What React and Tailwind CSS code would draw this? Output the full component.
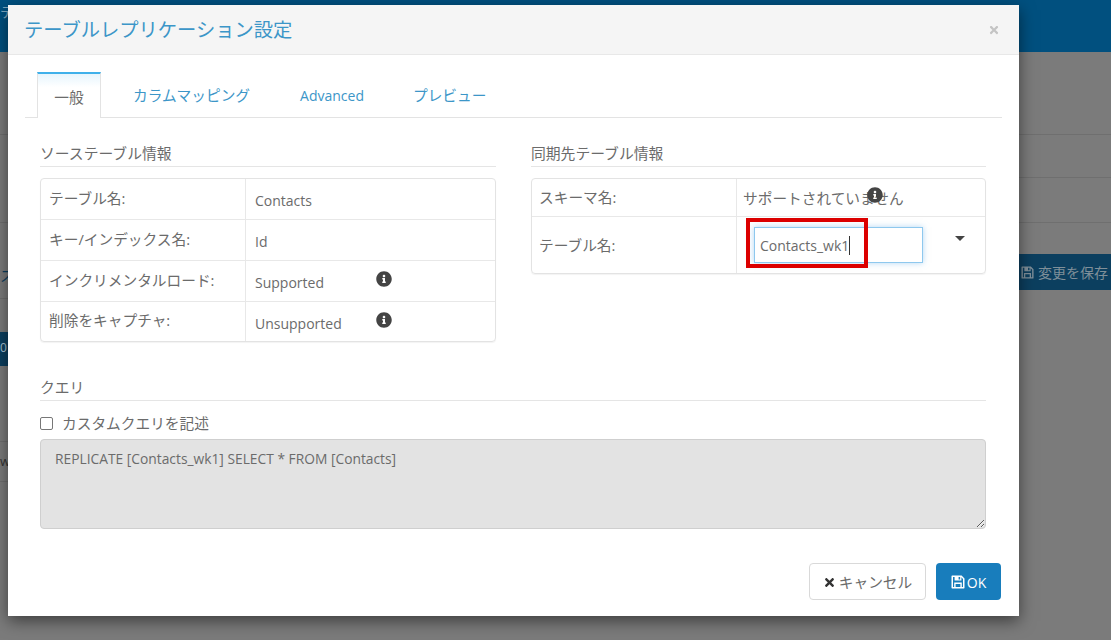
import { FaInfoCircle, FaTimes } from 'react-icons/fa'

const FONT = "font-['Open_Sans','Noto_Sans_CJK_JP',sans-serif]"

const SOURCE_ROWS = [
  { label: 'テーブル名:', value: 'Contacts', height: 'h-[40px]' },
  { label: 'キー/インデックス名:', value: 'Id', height: 'h-[41px]' },
  { label: 'インクリメンタルロード:', value: 'Supported', info: true, height: 'h-[41px]' },
  { label: '削除をキャプチャ:', value: 'Unsupported', info: true, height: 'h-[40px]' },
]

// floppy-o, the fa package only has a thinner one
function SaveIcon({ className }) {
  return (
    <svg viewBox="0 0 14 14" className={className} fill="currentColor">
      <path
        fillRule="evenodd"
        d="M1.2 0.5H10.6L13.5 3.4V12.8Q13.5 13.5 12.8 13.5H1.2Q0.5 13.5 0.5 12.8V1.2Q0.5 0.5 1.2 0.5ZM2 2V12H3.2V7.6H10.8V12H12V4L10.4 2.3V5.6H3.6V2ZM4.6 9V12H9.4V9ZM7.6 2V4.6H9.2V2Z"
      />
    </svg>
  )
}

function SectionTitle({ children }) {
  return (
    <div className="h-[27px] border-b border-[#e5e5e5] text-[14.8px] leading-[26px] text-[#6b6b6b]">{children}</div>
  )
}

// modal behind page, only slivers show on both sides
function BackgroundPage() {
  return (
    <div className="h-[640px] overflow-hidden bg-[#7b7b7b]">
      <div className="h-[52px] bg-[#01507f] pt-[2px] text-[14px] leading-[20px] text-[#7fa8bf]">テ</div>
      <div className="h-[83px] border-b border-[#6f6f6f]" />
      <div className="ml-[1000px] h-[43px] border-b border-[#6f6f6f]" />
      <div className="h-[45px] border-b border-[#6f6f6f]" />
      <div className="flex justify-end pt-[31px]">
        <div className="flex h-[36px] w-[92px] items-center gap-[4px] bg-[#0c3f5f] pl-[2px] text-[14px] whitespace-nowrap text-[#7f8f99]">
          <SaveIcon className="h-[13px] w-[13px] shrink-0" />
          変更を保存
        </div>
      </div>
    </div>
  )
}

export default function App() {
  return (
    <div className={`relative h-[640px] w-[1111px] overflow-hidden ${FONT}`}>
      <BackgroundPage />

      <div className="absolute top-[332px] left-0 h-[34px] w-[8px] bg-[#0c3f5f] pt-[8px] text-[12px] leading-[16px] text-[#a9c3d3]">0</div>
      <div className="absolute top-[267px] left-0 text-[14px] leading-[18px] text-[#0c3f5f]">ス</div>
      <div className="absolute top-[452px] left-0 text-[13px] leading-[18px] text-[#333]">w</div>
      <div className="absolute top-[298px] left-0 h-px w-[8px] bg-[#6f6f6f]" />
      <div className="absolute top-[441px] left-0 h-px w-[8px] bg-[#6f6f6f]" />
      <div className="absolute top-[481px] left-0 h-px w-[8px] bg-[#6f6f6f]" />

      <div className="absolute top-[5px] left-[8px] flex h-[611px] w-[1011px] flex-col bg-white shadow-[0_5px_15px_rgba(0,0,0,0.5)]">
        <div className="flex h-[50px] shrink-0 items-center justify-between border-b border-[#e8e8e8] bg-[#f5f5f5] pr-[19px] pl-[16px]">
          <div className="pt-[1px] text-[19.3px] text-[#3c96c8]">テーブルレプリケーション設定</div>
          <FaTimes className="text-[12px] text-[#c4c4c4]" />
        </div>

        <div className="flex flex-1 flex-col px-[17px] pt-[17px]">
          <div className="flex h-[46px] items-stretch border-b border-[#e3e3e3] text-[14.7px]">
            <div className="mb-[-1px] ml-[12px] flex w-[64px] items-center justify-center border-x border-t-2 border-x-[#e3e3e3] border-t-[#3fb0ea] bg-linear-to-b from-[#e6f5fd] to-white to-30% pt-[2px] text-[#6b6b6b]">
              一般
            </div>
            <div className="ml-[32px] flex items-center pt-[2px] text-[#3c96c8]">カラムマッピング</div>
            <div className="ml-[50px] flex items-center pt-[2px] text-[14px] text-[#3c96c8]">Advanced</div>
            <div className="ml-[49px] flex items-center pt-[2px] text-[#3c96c8]">プレビュー</div>
          </div>

          <div className="mt-[22px] flex px-[15px]">
            <div className="w-[456px]">
              <SectionTitle>ソーステーブル情報</SectionTitle>
              <div className="mt-[11px] overflow-hidden rounded-[4px] border border-[#e3e3e3] shadow-[0_1px_1px_rgba(0,0,0,0.05)]">
                {SOURCE_ROWS.map((row, i) => (
                  <div key={row.label} className={`flex ${row.height} ${i > 0 ? 'border-t border-[#e8e8e8]' : ''}`}>
                    <div className="flex w-[205px] shrink-0 items-center border-r border-[#e8e8e8] pb-[2px] pl-[8px] text-[14.7px] text-[#6b6b6b]">
                      {row.label}
                    </div>
                    <div className="relative flex flex-1 items-center pt-[3px] pl-[9px] text-[14px] text-[#6b6b6b]">
                      {row.value}
                      {row.info && <FaInfoCircle className="absolute top-[10px] left-[130px] text-[16px] text-[#444]" />}
                    </div>
                  </div>
                ))}
              </div>
            </div>

            <div className="ml-[35px] w-[455px]">
              <SectionTitle>同期先テーブル情報</SectionTitle>
              <div className="mt-[11px] overflow-hidden rounded-[4px] border border-[#e3e3e3] shadow-[0_1px_1px_rgba(0,0,0,0.05)]">
                <div className="flex h-[37px]">
                  <div className="flex w-[205px] shrink-0 items-center border-r border-[#e8e8e8] pl-[7px] text-[14.7px] text-[#6b6b6b]">
                    スキーマ名:
                  </div>
                  <div className="relative flex flex-1 items-center pt-[1px] pl-[6px] text-[14.7px] text-[#6b6b6b]">
                    サポートされていません
                    <FaInfoCircle className="absolute top-[8px] left-[130px] text-[16px] text-[#444]" />
                  </div>
                </div>
                <div className="flex h-[57px] border-t border-[#e8e8e8]">
                  <div className="flex w-[205px] shrink-0 items-center border-r border-[#e8e8e8] pl-[7px] text-[14.7px] text-[#6b6b6b]">
                    テーブル名:
                  </div>
                  <div className="relative flex-1 pt-[10px] pl-[17px]">
                    <div className="flex h-[36px] w-[169px] items-center border border-[#8ec8ee] pt-[1px] pl-[5px] text-[14px] text-[#6b6b6b] shadow-[0_0_6px_rgba(102,175,233,0.5)]">
                      Contacts_wk1
                      <span className="h-[19px] w-px bg-[#333]" />
                    </div>
                    <div className="absolute top-[19px] left-[218px] h-0 w-0 border-x-[5px] border-t-[5px] border-x-transparent border-t-[#444]" />
                    <div className="absolute top-[1px] left-[9px] h-[50px] w-[122px] border-[4px] border-[#dc0000]" />
                  </div>
                </div>
              </div>
            </div>
          </div>

          <div className="mt-[32px] pr-[16px] pl-[15px]">
            <SectionTitle>クエリ</SectionTitle>
            <label className="mt-[11px] flex h-[22px] items-center text-[14.7px] text-[#6b6b6b]">
              <input type="checkbox" className="m-0 h-[13px] w-[13px] appearance-none rounded-[2px] border border-[#777] bg-white" />
              <span className="ml-[9px]">カスタムクエリを記述</span>
            </label>
            <textarea
              readOnly
              value="REPLICATE [Contacts_wk1] SELECT * FROM [Contacts]"
              className="mt-[5px] block h-[90px] w-full rounded-[4px] border border-[#cfcfcf] bg-[#e3e3e3] px-[14px] py-[9px] text-[13.8px] leading-[20px] text-[#6b6b6b] outline-none"
            />
          </div>

          <div className="mt-[34px] mr-px flex justify-end gap-[10px]">
            <div className="flex h-[37px] w-[117px] items-center justify-center gap-[3px] rounded-[4px] border border-[#d9d9d9] pt-px text-[14.7px] text-[#6b6b6b]">
              <FaTimes className="text-[13px] text-[#333]" />
              キャンセル
            </div>
            <div className="flex h-[37px] w-[65px] items-center justify-center gap-[2px] rounded-[4px] bg-[#187dbc] pt-px text-[14px] text-white">
              <SaveIcon className="h-[14px] w-[14px]" />
              OK
            </div>
          </div>
        </div>
      </div>
    </div>
  )
}
